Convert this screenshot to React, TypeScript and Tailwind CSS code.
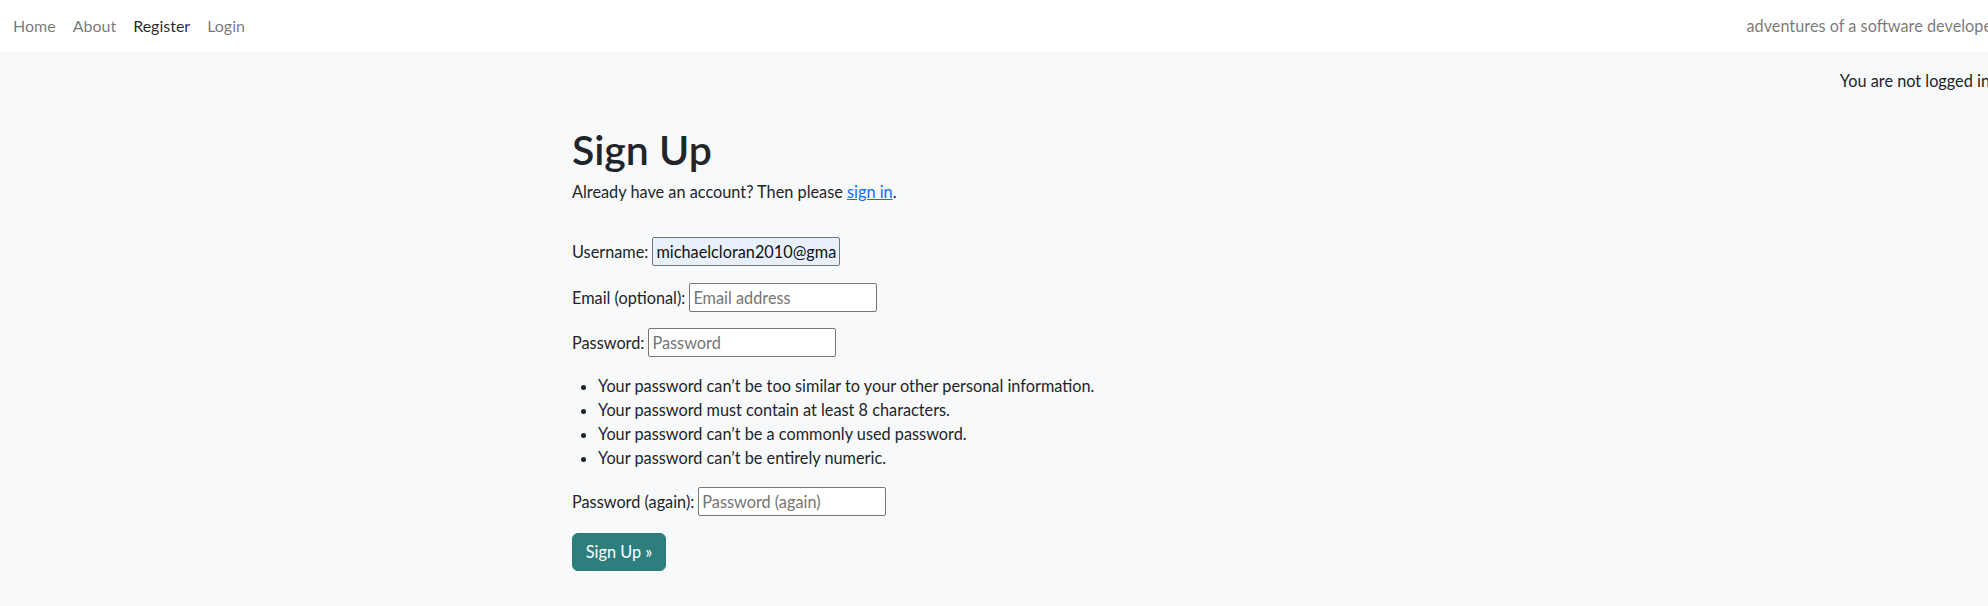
import React from 'react';

const font = { fontFamily: 'Lato, "Liberation Sans", sans-serif' };

const rules = [
  'Your password can’t be too similar to your other personal information.',
  'Your password must contain at least 8 characters.',
  'Your password can’t be a commonly used password.',
  'Your password can’t be entirely numeric.',
];

const Field: React.FC<{ label: string; placeholder?: string; value?: string; filled?: boolean; className?: string }> = ({
  label,
  placeholder,
  value,
  filled,
  className,
}) => (
  <div className={`flex items-center gap-[4px] ${className ?? ''}`}>
    <label className="text-[16.3px] leading-6 text-[#212529] whitespace-nowrap">{label}</label>
    <input
      readOnly
      value={value}
      placeholder={placeholder}
      className={`h-[29px] w-[188px] rounded-[2px] border border-[#767676] px-[3px] text-[16.3px] text-[#111] placeholder:text-[#757575] outline-none ${
        filled ? 'bg-[#e8f0fe]' : 'bg-white'
      }`}
      style={font}
    />
  </div>
);

export default function App() {
  return (
    <div className="min-h-[606px] w-full overflow-hidden bg-[#f8f9fa]" style={font}>
      <nav className="flex h-[52px] items-center bg-white pl-[13px]">
        <ul className="flex items-center gap-[17px] text-[16px]">
          <li className="text-[rgba(0,0,0,0.55)]">Home</li>
          <li className="text-[rgba(0,0,0,0.55)]">About</li>
          <li className="text-[rgba(0,0,0,0.85)]">Register</li>
          <li className="text-[rgba(0,0,0,0.55)]">Login</li>
        </ul>
        <span className="ml-auto -mr-[10px] shrink-0 whitespace-nowrap text-[16.3px] text-[rgba(0,0,0,0.55)]">
          adventures of a software developer
        </span>
      </nav>

      <div className="mt-[17px] flex justify-end">
        <span className="-mr-[2px] shrink-0 whitespace-nowrap text-[16.3px] leading-6 text-[#212529]">
          You are not logged in
        </span>
      </div>

      <main className="ml-[572px] mt-[33px] text-[#212529]">
        <h1 className="text-[41px] font-semibold leading-[48px]">Sign Up</h1>
        <p className="mt-[6px] text-[16.3px] leading-6">
          Already have an account? Then please{' '}
          <a href="#" className="text-[#0d6efd] underline">
            sign in
          </a>
          .
        </p>

        <Field className="mt-[33px]" label="Username:" value="michaelcloran2010@gmail.com" filled />
        <Field className="mt-[17px]" label="Email (optional):" placeholder="Email address" />
        <Field className="mt-[16px]" label="Password:" placeholder="Password" />

        <ul className="mt-[17px] list-disc pl-[26px] text-[16.3px] leading-6">
          {rules.map((r) => (
            <li key={r}>{r}</li>
          ))}
        </ul>

        <Field className="mt-[17px]" label="Password (again):" placeholder="Password (again)" />

        <button className="mt-[17px] h-[38px] w-[94px] rounded-[6px] border border-[#2a7a77] bg-[#2c7f7c] text-[16.3px] text-white">
          Sign Up »
        </button>
      </main>
    </div>
  );
}
